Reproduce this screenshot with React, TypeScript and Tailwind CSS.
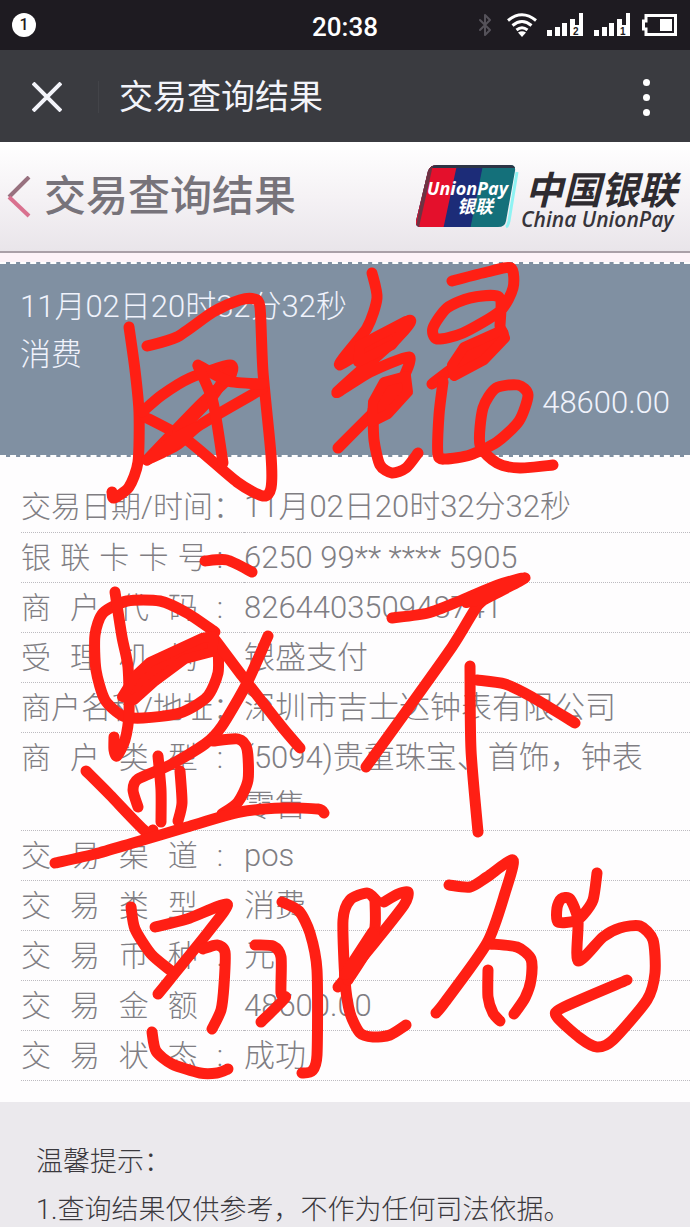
import { FC } from 'react'
import { LuBluetooth } from 'react-icons/lu'

type Point = [number, number]

interface Detail {
  label: string
  value: string
  spread?: boolean
}

const DETAILS: Detail[] = [
  { label: '交易日期/时间：', value: '11月02日20时32分32秒' },
  { label: '银联卡卡号:', value: '6250 99** **** 5905', spread: true },
  { label: '商户代码:', value: '826440350948741', spread: true },
  { label: '受理机构:', value: '银盛支付', spread: true },
  { label: '商户名称/地址：', value: '深圳市吉士达钟表有限公司' },
  { label: '商户类型:', value: '(5094)贵重珠宝、首饰，钟表零售', spread: true },
  { label: '交易渠道:', value: 'pos', spread: true },
  { label: '交易类型:', value: '消费', spread: true },
  { label: '交易币种:', value: '元', spread: true },
  { label: '交易金额:', value: '48600.00', spread: true },
  { label: '交易状态:', value: '成功', spread: true },
]

// 用银盛不跳码
const STROKES: Point[][] = [
  [[129, 327], [135, 370], [139, 412], [138, 462], [129, 487], [114, 498], [112, 492]],
  [[147, 346], [177, 337], [213, 312], [240, 300], [254, 299], [260, 307], [263, 372], [271, 455], [271, 488], [263, 496], [237, 482], [187, 440], [145, 417]],
  [[142, 412], [162, 395], [190, 378], [230, 365], [229, 378], [200, 405], [147, 460]],
  [[147, 460], [177, 445], [200, 425], [262, 389]],
  [[178, 432], [212, 397], [228, 372]],
  [[198, 365], [228, 381], [263, 384]],
  [[198, 366], [213, 402], [223, 463]],
  [[372, 273], [377, 298], [367, 328], [340, 365], [408, 321], [398, 337], [337, 392], [370, 372], [409, 357], [404, 377]],
  [[338, 448], [370, 416], [405, 382]],
  [[373, 410], [374, 440], [380, 465], [392, 473], [406, 468], [418, 453]],
  [[452, 281], [487, 272], [511, 268], [513, 288], [500, 311], [463, 333], [437, 339], [433, 328], [447, 308], [470, 298], [499, 297], [500, 326]],
  [[432, 384], [453, 368], [503, 333]],
  [[443, 382], [439, 415], [438, 455], [446, 459], [470, 455], [497, 442], [519, 421], [528, 395], [518, 385], [496, 388], [483, 408], [480, 445], [497, 463], [520, 468], [553, 465]],
  [[205, 561], [227, 560], [252, 572]],
  [[215, 632], [187, 613], [160, 601], [127, 601], [103, 613], [95, 635], [96, 670], [105, 700], [123, 716], [143, 718], [180, 713], [207, 697], [218, 673], [218, 648]],
  [[115, 592], [122, 637], [128, 667], [129, 713], [125, 740], [117, 756], [114, 750], [114, 737]],
  [[213, 637], [243, 677], [282, 727], [300, 748]],
  [[268, 636], [247, 683], [222, 726], [205, 744], [170, 765], [138, 779], [133, 790], [138, 807]],
  [[213, 741], [238, 739], [247, 749], [248, 780], [238, 802], [222, 814]],
  [[158, 756], [161, 790], [161, 822]],
  [[180, 771], [182, 803], [178, 821]],
  [[86, 771], [110, 795], [145, 831], [153, 830]],
  [[55, 863], [95, 854], [133, 843], [187, 827], [240, 812], [283, 808], [318, 809], [324, 813]],
  [[392, 618], [428, 613], [462, 600], [498, 585], [525, 578], [495, 594], [478, 605], [452, 647], [392, 731], [366, 767]],
  [[470, 666], [471, 750], [478, 832]],
  [[477, 680], [505, 684], [532, 697], [575, 723]],
  [[131, 907], [135, 929], [151, 954], [170, 970]],
  [[155, 927], [187, 919], [227, 904], [209, 931], [158, 994]],
  [[203, 949], [217, 945], [225, 952], [224, 985], [221, 1010], [212, 1029]],
  [[152, 1032], [156, 1051], [172, 1064], [200, 1073], [217, 1073], [228, 1069]],
  [[255, 945], [273, 946], [281, 957], [281, 993], [285, 998], [261, 1022]],
  [[282, 902], [299, 911], [310, 933], [317, 970], [317, 1055], [312, 1071], [302, 1073]],
  [[338, 987], [375, 942], [404, 905], [408, 892], [398, 894], [384, 902]],
  [[376, 900], [367, 893], [350, 900], [343, 920], [345, 980], [350, 1013], [360, 1033], [373, 1037], [390, 1035], [406, 1025]],
  [[375, 900], [375, 927], [367, 950], [348, 980]],
  [[449, 885], [470, 887], [487, 877], [513, 860], [505, 893], [487, 943], [445, 1002], [436, 1013]],
  [[490, 944], [517, 947], [531, 959], [531, 980], [525, 998], [514, 1014]],
  [[488, 970], [488, 997], [493, 1013], [500, 1021]],
  [[597, 873], [593, 900], [583, 915], [575, 921], [558, 922], [557, 908], [561, 899], [570, 899], [578, 920], [578, 961], [603, 937], [620, 928], [640, 926], [653, 940], [655, 973], [647, 1000], [613, 1040], [597, 1047], [580, 1038], [557, 1017], [562, 1008], [627, 980]],
]

// solid patches where the pen went back and forth
const PATCHES = [
  'M360 345L406 321L408 325L392 345L358 362Z',
  'M384 382L406 376L408 392L388 414L372 422L373 402Z',
  'M464 347L502 330L505 338L484 360L454 376L452 365Z',
  'M122 697L135 676L150 662L202 638L214 636L212 652L185 659L154 682L134 700Z',
  'M150 458L178 436L196 427L178 443Z',
  'M498 586L522 578L498 592L480 600L466 603Z',
  'M344 975L372 932L376 938L352 973Z',
]

const smooth = (points: Point[]) => {
  let d = `M${points[0][0]} ${points[0][1]}`
  for (let i = 0; i < points.length - 1; i++) {
    const a = points[i - 1] ?? points[i]
    const b = points[i]
    const c = points[i + 1]
    const e = points[i + 2] ?? c
    d += `C${b[0] + (c[0] - a[0]) / 8} ${b[1] + (c[1] - a[1]) / 8} ${c[0] - (e[0] - b[0]) / 8} ${c[1] - (e[1] - b[1]) / 8} ${c[0]} ${c[1]}`
  }
  return d
}

const Signal: FC<{ sim: string }> = ({ sim }) => (
  <svg width="37" height="26" viewBox="0 0 37 26" fill="#fff" aria-hidden="true">
    <rect x="0" y="18" width="5" height="6" />
    <rect x="8" y="15" width="5" height="9" />
    <rect x="15" y="11" width="5" height="13" />
    <path d="M23 7h5v6h4V1h4v23H23z" />
    <text x="26" y="23" fontSize="10" fontWeight="700" fill="#1e1b21" className="font-['Liberation_Sans',sans-serif]">
      {sim}
    </text>
  </svg>
)

const StatusBar: FC = () => (
  <div className="grid grid-cols-3 items-center h-[50px] px-3 bg-[#1e1b21] text-white">
    <span className="flex items-center justify-center w-6 h-6 rounded-full bg-white text-[#1e1b21] text-base font-medium">
      1
    </span>
    <span className="pt-1 text-center text-[26px] leading-[30px] font-medium">20:38</span>
    <div className="flex items-center justify-end gap-2.5">
      <LuBluetooth className="w-6 h-7 shrink-0 text-[#55525a]" aria-hidden="true" />
      <svg width="30" height="26" viewBox="0 0 30 26" fill="none" stroke="#fff" strokeWidth="3" className="shrink-0" aria-hidden="true">
        <path d="M1 8.500Q15 -3 29 8.500M5.500 13.500Q15 5.500 24.500 13.500M9.500 18Q15 13.500 20.500 18" />
        <path d="M11 20.500Q15 18 19 20.500L15 25z" fill="#fff" stroke="none" />
      </svg>
      <div className="flex shrink-0 gap-2.5">
        <Signal sim="2" />
        <Signal sim="1" />
      </div>
      <svg width="37" height="24" viewBox="0 0 37 24" className="shrink-0" aria-hidden="true">
        <path d="M5 2.500H34.500V21.500H5V16H2.500V8H5Z" fill="none" stroke="#fff" strokeWidth="3" />
        <rect x="19" y="6" width="12" height="12" fill="#fff" />
      </svg>
    </div>
  </div>
)

const TitleBar: FC = () => (
  <div className="flex items-center h-[92px] pt-0.5 px-8 bg-[#3a3b40] text-[#f3f4fa]">
    <button type="button" aria-label="关闭">
      <svg width="30" height="30" viewBox="0 0 30 30" stroke="currentColor" strokeWidth="4">
        <path d="M1 1L29 29M29 1L1 29" />
      </svg>
    </button>
    <span className="w-px h-8 ml-9 mr-5 bg-[#434449]" />
    <h1 className="flex-1 text-[34px] leading-[40px]">交易查询结果</h1>
    <button type="button" aria-label="更多" className="flex flex-col items-center gap-2 w-6">
      <span className="w-[7px] h-[7px] rounded-full bg-white" />
      <span className="w-[7px] h-[7px] rounded-full bg-white" />
      <span className="w-[7px] h-[7px] rounded-full bg-white" />
    </button>
  </div>
)

const UnionPayLogo: FC = () => (
  <svg width="270" height="74" viewBox="416 160 270 74" className="shrink-0" role="img" aria-label="中国银联">
    <defs>
      <clipPath id="card">
        <path d="M437 165H510Q516 165 515 171L506 221Q505 227 498 227H421Q415 227 416 221L428 171Q430 165 437 165Z" />
      </clipPath>
    </defs>
    <path d="M506 227Q508 226 509 221L517 172" fill="none" stroke="#8ff3f3" strokeWidth="3" />
    <g clipPath="url(#card)">
      <rect x="410" y="160" width="110" height="70" fill="#14707a" />
      <path d="M410 160H484L470 230H410Z" fill="#1c2c78" />
      <path d="M410 160H458L443 230H410Z" fill="#e4102c" />
      <path d="M428 165H515V168H428Z" fill="#2d3445" />
      <path d="M428 165L416 227H419L433 165Z" fill="#6d3343" />
    </g>
    <text x="427" y="195" fontSize="18" fontWeight="700" fontStyle="italic" fill="#fff" className="font-['Open_Sans',sans-serif]">
      UnionPay
    </text>
    <text x="457" y="213" fontSize="18" fontWeight="700" fontStyle="italic" fill="#fff">
      银联
    </text>
    <text x="525" y="204" fontSize="38" fontWeight="700" fontStyle="italic" fill="#2e2b30">
      中国银联
    </text>
    <text x="521" y="227" fontSize="21" fontWeight="600" fontStyle="italic" fill="#37343a" className="font-['Open_Sans',sans-serif]">
      China UnionPay
    </text>
  </svg>
)

const DetailTable: FC = () => (
  <table className="w-full border-collapse leading-[48px] text-[#807e83] font-light">
    <tbody>
      {DETAILS.map(({ label, value, spread }) => (
        <tr key={label} className="h-[50px] border-b border-dotted border-[#bdbbc0]">
          <th scope="row" className="w-[223px] p-0 pt-px align-top text-left text-[30px] font-light whitespace-nowrap">
            {spread ? (
              <span className="flex justify-between w-[202px]">
                {label.split('').map((char, i) => (
                  <span key={i}>{char}</span>
                ))}
              </span>
            ) : (
              label
            )}
          </th>
          <td className="p-0 pt-px pr-10 align-top text-[31px]">{value}</td>
        </tr>
      ))}
    </tbody>
  </table>
)

const Handwriting: FC = () => (
  <svg
    viewBox="0 0 690 1227"
    className="absolute inset-x-0 top-0 w-full pointer-events-none"
    fill="none"
    stroke="#ff1f14"
    strokeLinecap="round"
    strokeLinejoin="round"
    aria-hidden="true"
  >
    {STROKES.map((points, i) => (
      <path key={i} d={smooth(points)} strokeWidth="11" />
    ))}
    {PATCHES.map((d) => (
      <path key={d} d={d} fill="#ff1f14" strokeWidth="10" />
    ))}
  </svg>
)

const App: FC = () => {
  return (
    <div className="relative overflow-hidden bg-[#fefdfe] font-['Roboto','Noto_Sans_CJK_SC',sans-serif]">
      <StatusBar />
      <TitleBar />

      <header className="flex items-center justify-between h-[111px] pl-1.5 pr-1 border-b-2 border-[#aaa0a8] bg-linear-to-b from-white via-[#f5f2f5] to-[#e9e5ea]">
        <a href="#" className="flex items-center gap-3 text-[#77737a]">
          <svg width="26" height="42" viewBox="0 0 26 42" fill="none" strokeWidth="4" aria-hidden="true">
            <path d="M23 1L3 21" stroke="#98717f" />
            <path d="M3 21L23 40" stroke="#d9718f" />
          </svg>
          <span className="text-[42px] leading-[50px] font-medium">交易查询结果</span>
        </a>
        <UnionPayLogo />
      </header>
      <div className="h-[9px] bg-[#fdf3f8]" />

      <section className="px-5 pt-[19px] pb-7 border-y-2 border-dashed border-white bg-[#8090a2] text-[31px] leading-[48px] font-light text-[#f0f3fc]">
        <p>11月02日20时32分32秒</p>
        <p>消费</p>
        <p className="text-right">48600.00</p>
      </section>

      <main className="pt-[25px] pb-[21px] pl-[21px]">
        <DetailTable />
      </main>

      <footer className="flex flex-col gap-3.5 pt-[43px] px-9 bg-[#ebe9ed] text-[27px] leading-[34px] font-light text-[#3b393e]">
        <p>温馨提示：</p>
        <p>1.查询结果仅供参考，不作为任何司法依据。</p>
      </footer>

      <Handwriting />
    </div>
  )
}

export default App
